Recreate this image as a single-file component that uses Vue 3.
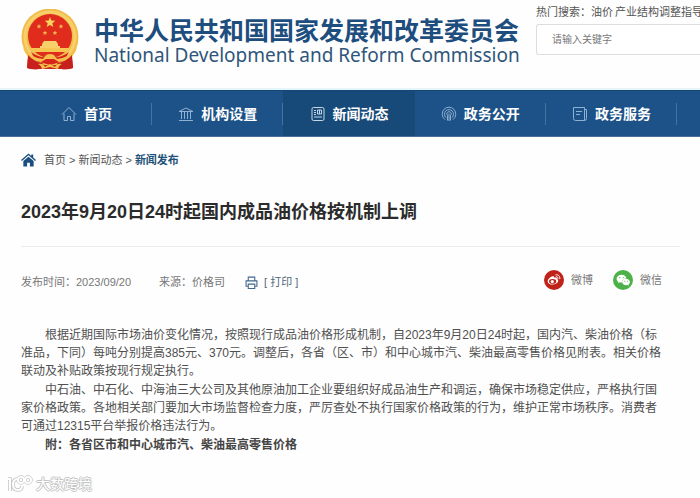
<script setup>
import { ref } from 'vue';

const keyword = ref('');

const navItems = [
    { label: '首页', icon: 'home' },
    { label: '机构设置', icon: 'bank' },
    { label: '新闻动态', icon: 'news', active: true },
    { label: '政务公开', icon: 'open' },
    { label: '政务服务', icon: 'service' }
];

const printPage = () => {
    window.print();
};
</script>

<template>
    <div class="page">
        <header class="site-header">
            <svg class="emblem" viewBox="0 0 58 62" aria-hidden="true">
                <path d="M8 40 L6 59 Q12 61 17 60 L41 60 Q46 61 52 59 L50 40 Z" fill="#c8201c" />
                <circle cx="29" cy="28" r="28.5" fill="#f1bd4a" />
                <circle cx="29" cy="28" r="25" fill="none" stroke="#f8d06a" stroke-width="3" />
                <circle cx="29" cy="27" r="22" fill="#df2c1d" />
                <path
                    d="M29 8l1.4 3.6 3.9.2-3 2.5 1 3.8-3.3-2.1-3.3 2.1 1-3.8-3-2.5 3.9-.2z"
                    fill="#f9d45c"
                />
                <path
                    d="M18 15l.7 1.5 1.6.2-1.2 1.1.3 1.6-1.4-.8-1.5.8.3-1.6-1.1-1.1 1.6-.2zM40 15l.7 1.5 1.6.2-1.2 1.1.3 1.6-1.4-.8-1.5.8.3-1.6-1.1-1.1 1.6-.2zM24 21.5l.7 1.5 1.6.2-1.2 1.1.3 1.6-1.4-.8-1.5.8.3-1.6-1.1-1.1 1.6-.2zM34 21.5l.7 1.5 1.6.2-1.2 1.1.3 1.6-1.4-.8-1.5.8.3-1.6-1.1-1.1 1.6-.2z"
                    fill="#f6b24c"
                />
                <path d="M21 35l2-3h12l2 3v2h2v4H19v-4h2z" fill="#f8d06a" />
                <path d="M9 39h40l-3 4H12z" fill="#f6c552" />
                <path d="M10 43q8 6 14 5l5-3 5 3q6 1 14-5l-5 9-14 4-14-4z" fill="#d8241c" />
                <path
                    d="M2 38q8 11 20 12l3-4q4-2 8 0l3 4q12-1 20-12-3 13-18 15l-5-3h-8l-5 3Q5 51 2 38z"
                    fill="#f4c04c"
                />
                <path d="M7 46q6 7 15 8l-4 6q-6 1-12-1zM51 46q-6 7-15 8l4 6q6 1 12-1z" fill="#c8201c" />
                <path
                    d="M17 55q5-1 7 3l5-3 5 3q2-4 7-3-3 1-4 5l-8-2-8 2q-1-4-4-5z"
                    fill="#f4c04c"
                />
            </svg>
            <div class="site-name">
                <h1 class="name-zh">中华人民共和国国家发展和改革委员会</h1>
                <p class="name-en">National Development and Reform Commission</p>
            </div>
            <div class="search">
                <p class="hot-words">
                    <span>热门搜索：</span><a href="#">油价</a>
                    <a href="#">产业结构调整指导</a>
                </p>
                <input
                    v-model="keyword"
                    type="text"
                    class="search-input"
                    placeholder="请输入关键字"
                    aria-label="请输入关键字"
                />
            </div>
        </header>

        <nav class="main-nav">
            <a
                v-for="item in navItems"
                :key="item.label"
                href="#"
                :class="['nav-item', { active: item.active }]"
            >
                <svg class="nav-icon" viewBox="0 0 16 16" aria-hidden="true">
                    <path v-if="item.icon === 'home'" d="M1 8.5L8 1.5l7 7M3 7.5V14.5h3.500v-4h3v4H13V7.5" />
                    <path
                        v-else-if="item.icon === 'bank'"
                        d="M1 5.5L8 2l7 3.5zM3.5 6v7M6.5 6v7M9.5 6v7M12.5 6v7M1 14.5h14"
                    />
                    <path
                        v-else-if="item.icon === 'news'"
                        d="M3.5 1.5h9q1.5 0 1.5 1.5v10q0 1.5-1.5 1.5h-9Q2 14.5 2 13V3q0-1.5 1.5-1.5zM7.5 4h4v4h-4zM4 4.5h2M4 6.5h2M4 8.5h2M4 11h8M9.5 4v4"
                    />
                    <path
                        v-else-if="item.icon === 'open'"
                        d="M4 13.5a6.8 6.8 0 1 1 8 0M5 11.5a4.5 4.5 0 1 1 6 0M6.5 9.5a2.2 2.2 0 1 1 3 0M8 7.5v7.5M6.5 9.5v5M9.5 9.5v5"
                    />
                    <path v-else d="M1.5 1.5h11v13h-9q-2 0-2-2zM12.5 3.5h2v9q0 2-2 2M4 5.5h6M4 8.5h4" />
                </svg>
                <span>{{ item.label }}</span>
            </a>
        </nav>

        <main class="content">
            <div class="breadcrumb">
                <svg class="crumb-icon" viewBox="0 0 16 14" aria-hidden="true">
                    <path d="M8 0L0 7l1 1 7-6 7 6 1-1-3-2.7V1h-2v1.6z" />
                    <path d="M8 3.500L2.500 8v6h4v-4h3v4h4V8z" />
                </svg>
                <a href="#">首页</a>
                <span>&gt;</span>
                <a href="#">新闻动态</a>
                <span>&gt;</span>
                <a href="#" class="current">新闻发布</a>
            </div>

            <h2 class="title">2023年9月20日24时起国内成品油价格按机制上调</h2>

            <div class="meta">
                <span>发布时间：2023/09/20</span>
                <span class="source">来源：价格司</span>
                <button type="button" class="print-btn" @click="printPage">
                    <svg class="print-icon" viewBox="0 0 12 12" aria-hidden="true">
                        <path d="M3 4.5V1h6v3.500M2.500 9.500H1v-5h10v5H9.500M3 7.500h6v4H3z" />
                    </svg>
                    <span>[ 打印 ]</span>
                </button>
                <div class="share">
                    <a href="#" class="share-link">
                        <svg class="share-icon" viewBox="0 0 20 20" aria-hidden="true">
                            <circle cx="10" cy="10" r="10" fill="#bf2219" />
                            <path
                                d="M8.500 6.300c1.200-.4 2 .1 1.700 1.400 1.800-.7 3.100-.2 2.700 1.300 1 .3 1.500 1 1.300 2-.4 2-2.900 3.600-5.700 3.600-2.700 0-4.800-1.400-4.800-3.200 0-1.900 2.500-4.500 4.800-5.100z"
                                fill="#fff"
                            />
                            <ellipse cx="8.600" cy="11.400" rx="3.600" ry="2.400" fill="#bf2219" />
                            <circle cx="8.300" cy="11.600" r="1.600" fill="#fff" />
                            <path
                                d="M11.800 4.800c2.600-.6 4.600 1.500 4 4M12.200 6.700c1.200-.2 2 .6 1.800 1.800"
                                fill="none"
                                stroke="#fff"
                                stroke-linecap="round"
                            />
                        </svg>
                        <span>微博</span>
                    </a>
                    <a href="#" class="share-link">
                        <svg class="share-icon" viewBox="0 0 20 20" aria-hidden="true">
                            <circle cx="10" cy="10" r="10" fill="#4bb148" />
                            <path
                                d="M8.500 4.800c2.700 0 4.700 1.600 4.900 3.600-2.700 0-4.700 1.700-4.500 4.100-.8.100-1.500 0-2.200-.2l-1.700.9.400-1.500C4.300 11 3.600 9.900 3.600 8.700c0-2.200 2.200-3.900 4.900-3.900z"
                                fill="#fff"
                            />
                            <path
                                d="M13 8.800c2.200 0 3.900 1.400 3.900 3.200 0 1-.5 1.900-1.400 2.500l.3 1.200-1.400-.7c-2.900.6-5.300-.9-5.300-3s1.700-3.200 3.900-3.200z"
                                fill="#fff"
                            />
                            <g fill="#4bb148">
                                <circle cx="6.800" cy="7.600" r=".6" />
                                <circle cx="10.200" cy="7.600" r=".6" />
                                <circle cx="11.800" cy="11.200" r=".5" />
                                <circle cx="14.300" cy="11.200" r=".5" />
                            </g>
                        </svg>
                        <span>微信</span>
                    </a>
                </div>
            </div>

            <article class="article">
                <p>
                    根据近期国际市场油价变化情况，按照现行成品油价格形成机制，自2023年9月20日24时起，国内汽、柴油价格（标<br />准品，下同）每吨分别提高385元、370元。调整后，各省（区、市）和中心城市汽、柴油最高零售价格见附表。相关价格<br />联动及补贴政策按现行规定执行。
                </p>
                <p>
                    中石油、中石化、中海油三大公司及其他原油加工企业要组织好成品油生产和调运，确保市场稳定供应，严格执行国<br />家价格政策。各地相关部门要加大市场监督检查力度，严厉查处不执行国家价格政策的行为，维护正常市场秩序。消费者<br />可通过12315平台举报价格违法行为。
                </p>
                <p><a href="#" class="attachment">附：各省区市和中心城市汽、柴油最高零售价格</a></p>
            </article>
        </main>

        <footer class="watermark">
            <svg class="watermark-logo" viewBox="0 0 26 18" aria-hidden="true">
                <g fill="none" stroke="#c4c4c4" stroke-width="3.5">
                    <path d="M1 4h2v12M11 4q-5 0-5 5.500T11 15q4 0 4-4" />
                    <circle cx="14" cy="5" r="3" />
                    <circle cx="21" cy="5" r="3" />
                </g>
                <g fill="none" stroke="#fff" stroke-width="2">
                    <path d="M1 4h2v12M11 4q-5 0-5 5.500T11 15q4 0 4-4" />
                    <circle cx="14" cy="5" r="3" />
                    <circle cx="21" cy="5" r="3" />
                </g>
            </svg>
            <span>大数跨境</span>
        </footer>
    </div>
</template>

<style>
body {
    background-color: #fefefe;
}
</style>

<style scoped>
.page {
    overflow: hidden;
    font-family: "Liberation Sans", "Noto Sans CJK SC", sans-serif;
    font-size: 11px;
    line-height: 16px;
    color: #555;
}

h1,
h2,
p {
    margin: 0;
}

a {
    color: inherit;
    text-decoration: none;
}

.site-header {
    display: flex;
    height: 90px;
    padding-left: 21px;
    box-sizing: border-box;
    border-bottom: 2px solid #e6f5fa;
}

.emblem {
    flex: none;
    width: 58px;
    height: 62px;
    margin-top: 9px;
}

.site-name {
    flex: none;
    width: 442px;
    margin-left: 15px;
    padding-top: 18px;
    white-space: nowrap;
}

.name-zh {
    font-size: 25px;
    line-height: 26px;
    font-weight: 700;
    color: #1d4e7e;
}

.name-en {
    font-family: "Noto Sans", sans-serif;
    font-size: 19px;
    line-height: 22px;
    color: #2f567a;
}

.search {
    flex: 1;
    min-width: 0;
    padding-top: 4px;
    overflow: hidden;
    white-space: nowrap;
}

.hot-words a + a {
    margin-left: 2px;
}

.search-input {
    display: block;
    width: 100%;
    height: 31px;
    margin-top: 4px;
    padding: 0 15px;
    box-sizing: border-box;
    border: 1px solid #ddd;
    border-right: 0;
    border-radius: 3px 0 0 3px;
    background-color: #fff;
    font-family: inherit;
    font-size: 10px;
    color: #555;
    outline: none;
}

.search-input::placeholder {
    color: #777;
}

.main-nav {
    display: flex;
    height: 47px;
    padding: 0 23px 0 21px;
    box-sizing: border-box;
    border-top: 1px solid #164675;
    border-bottom: 1px solid #4c7196;
    background-color: #1c5287;
}

.nav-item {
    position: relative;
    display: flex;
    flex: 1;
    align-items: center;
    justify-content: center;
    gap: 7px;
    font-size: 14px;
    font-weight: 700;
    color: #fff;
}

.nav-item::after {
    content: "";
    position: absolute;
    top: 12px;
    right: 0;
    width: 1px;
    height: 22px;
    background-color: #4473a1;
}

.nav-item.active {
    background-color: #174a79;
}

.nav-item.active::after {
    display: none;
}

.nav-icon {
    width: 16px;
    height: 16px;
    fill: none;
    stroke: #8fb0d0;
    stroke-width: 1;
}

.active .nav-icon {
    stroke: #c5d6e6;
}

.content {
    padding: 0 20px 0 21px;
}

.breadcrumb {
    display: flex;
    align-items: center;
    gap: 3px;
    padding-top: 15px;
}

.crumb-icon {
    width: 15px;
    height: 14px;
    margin-right: 5px;
    fill: #1c4f80;
}

.current {
    font-weight: 700;
    color: #1f5278;
}

.title {
    margin-top: 30px;
    padding-bottom: 20px;
    border-bottom: 1px solid #ececec;
    font-size: 18px;
    line-height: 28px;
    font-weight: 700;
    color: #2b2b2b;
}

.meta {
    display: flex;
    align-items: center;
    margin-top: 22px;
    height: 26px;
    color: #777;
}

.source {
    margin-left: 28px;
}

.print-btn {
    display: flex;
    align-items: center;
    gap: 6px;
    margin-left: 20px;
    padding: 0;
    border: 0;
    background: none;
    font: inherit;
    color: #52687a;
    cursor: pointer;
}

.print-icon {
    width: 13px;
    height: 13px;
    fill: none;
    stroke: #41698d;
    stroke-width: 1;
}

.share {
    display: flex;
    gap: 20px;
    margin: -4px 0 0 auto;
    padding-right: 18px;
}

.share-link {
    display: flex;
    align-items: center;
    gap: 7px;
}

.share-icon {
    width: 20px;
    height: 20px;
}

.article {
    display: flex;
    flex-direction: column;
    gap: 1px;
    margin-top: 31px;
    font-size: 12px;
    line-height: 18px;
    color: #505050;
    white-space: nowrap;
}

.article p {
    text-indent: 2em;
}

.attachment {
    font-weight: 700;
    color: #444;
}

.watermark {
    display: flex;
    align-items: center;
    gap: 3px;
    margin-top: 20px;
    padding-left: 7px;
    font-size: 14px;
    line-height: 20px;
    color: #fff;
    text-shadow: 1px 0 #c4c4c4, -1px 0 #c4c4c4, 0 1px #c4c4c4, 0 -1px #c4c4c4;
}

.watermark-logo {
    width: 26px;
    height: 18px;
}
</style>
